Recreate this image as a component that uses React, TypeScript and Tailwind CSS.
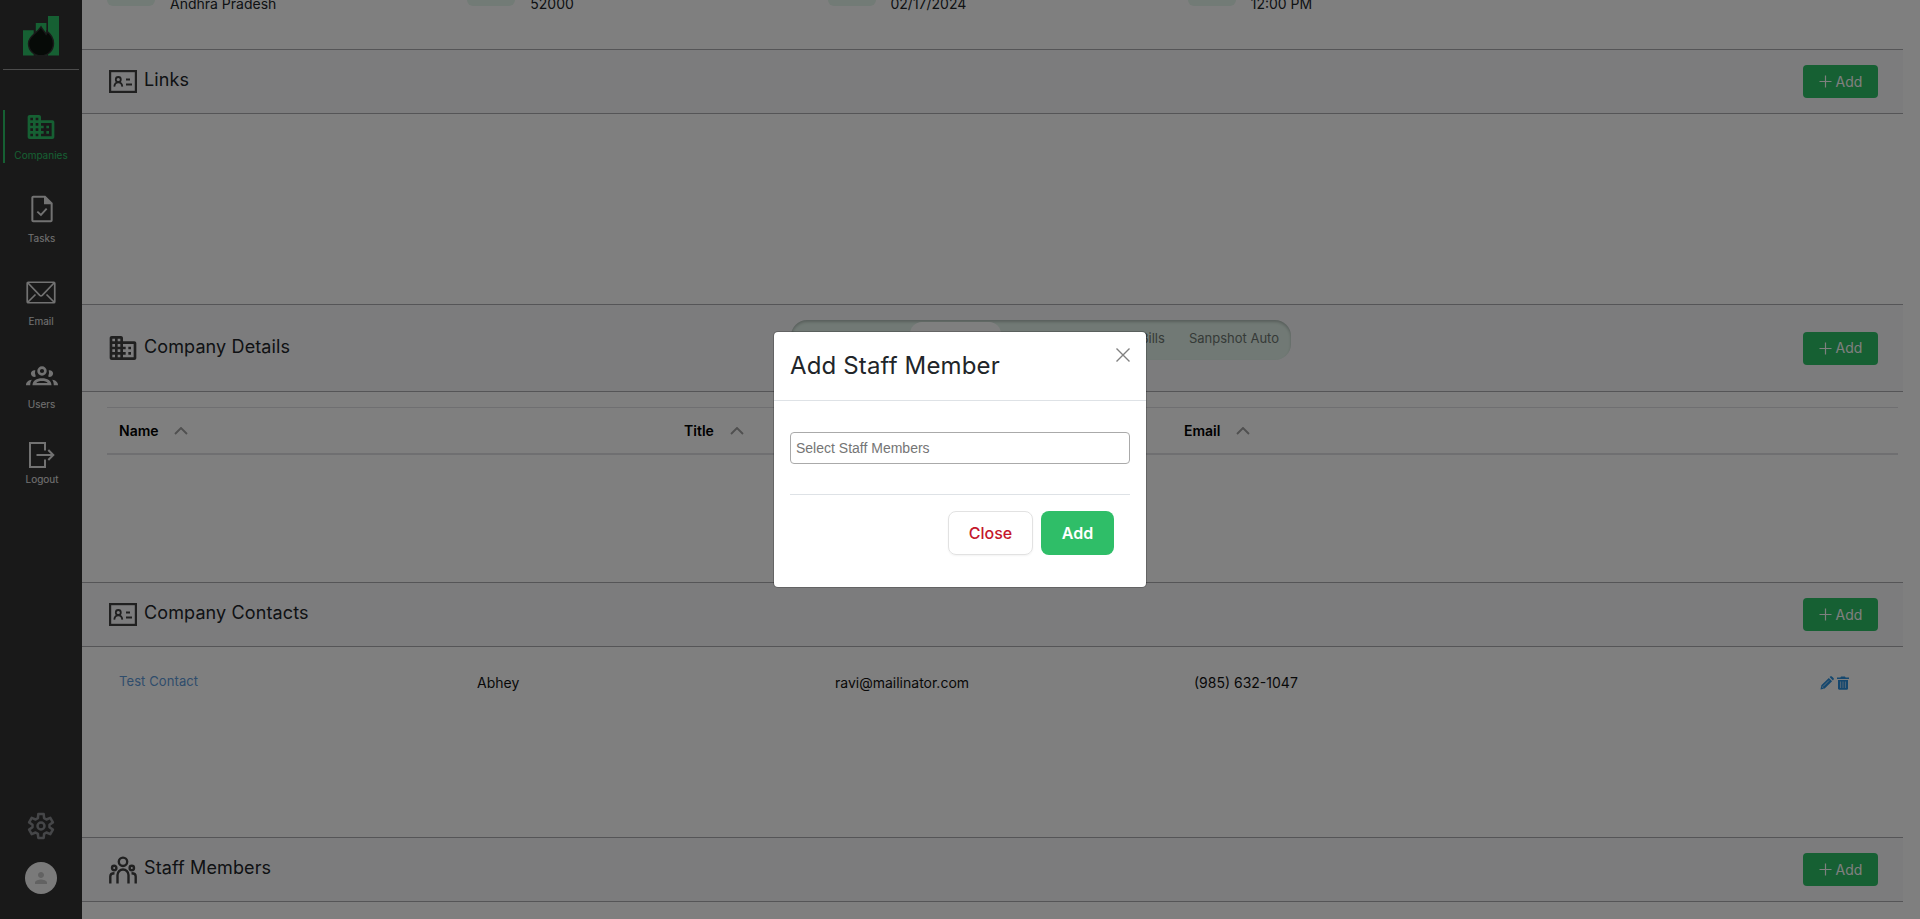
import React from 'react';
import { MdPerson } from 'react-icons/md';

type IconProps = { className?: string };

const LogoMark = ({ className }: IconProps) => (
  <svg className={className} viewBox="0 0 36 40" width="36" height="40">
    <path fill="#2cc066" d="M0 14.300h10.700v25.200H0zM12.800 7h10.600v32.500H12.800zM25 0h11v39.500H25z" />
    <path
      fill="#0c140f"
      stroke="#333333"
      strokeWidth="1.400"
      d="M18 10.800c1.800 3.400 4 5 5.200 7.600 .7 -.8 .9 -2 .8 -3 3.500 2.600 6.500 7 6.500 12 0 7 -5.500 12.400 -12.500 12.400S5.500 34.400 5.500 27.400c0 -7.200 7.800 -9.400 12.500 -16.600z"
    />
  </svg>
);

const BuildingIcon = ({ className }: IconProps) => (
  <svg className={className} viewBox="0 0 24 24" width="32" height="32" fill="currentColor">
    <path d="M12 7V4.500C12 3.700 11.300 3 10.500 3h-7C2.700 3 2 3.700 2 4.500v15c0 .8.7 1.500 1.500 1.500h17c.8 0 1.500-.7 1.500-1.500v-11c0-.8-.7-1.500-1.500-1.500H12zM6 19H4v-2h2v2zm0-4H4v-2h2v2zm0-4H4V9h2v2zm0-4H4V5h2v2zm4 12H8v-2h2v2zm0-4H8v-2h2v2zm0-4H8V9h2v2zm0-4H8V5h2v2zm10 12h-8v-2h2v-2h-2v-2h2v-2h-2V9h8v10zm-2-8h-2v2h2v-2zm0 4h-2v2h2v-2z" />
  </svg>
);

const TaskIcon = ({ className }: IconProps) => (
  <svg className={className} viewBox="0 0 24 24" width="32" height="32">
    <path
      fill="currentColor"
      d="M14.500 2H5.500C4.700 2 4 2.700 4 3.500v17c0 .8.7 1.500 1.500 1.500h13c.8 0 1.500-.7 1.500-1.500V7.500L14.500 2zm4 18.500h-13v-17h8V8.500h5v12z"
    />
    <path d="M8.500 14l2.700 2.400 4.300-4.700" fill="none" stroke="currentColor" strokeWidth="1.400" />
  </svg>
);

const MailIcon = ({ className }: IconProps) => (
  <svg className={className} viewBox="0 0 30 23" width="30" height="23" fill="none" stroke="currentColor" strokeWidth="1.700">
    <rect x="1.250" y="1.250" width="27.500" height="20.500" rx="1" />
    <path d="M1.500 1.500l12.300 12.800q1.200 1 2.400 0L28.500 1.500M1.500 21.500l8-8M28.500 21.500l-8-8" />
  </svg>
);

const UsersIcon = ({ className }: IconProps) => (
  <svg className={className} viewBox="0 0 32 20" width="32" height="20" fill="currentColor">
    <circle cx="16" cy="5" r="3.400" fill="none" stroke="currentColor" strokeWidth="2.600" />
    <path d="M9.300 4.300A3.400 3.400 0 1 0 9.800 10.600 8 8 0 0 1 9.300 4.300zM22.700 4.300A3.400 3.400 0 1 1 22.200 10.600 8 8 0 0 0 22.700 4.300z" />
    <path d="M5.800 13.700C2.500 14.200 0 15.900 0 19.200h4.200c0-2.200.5-4 1.600-5.500zM26.200 13.700c3.300.5 5.800 2.200 5.800 5.500h-4.200c0-2.200-.5-4-1.600-5.500z" />
    <path
      fillRule="evenodd"
      d="M6.500 19.200c0-4.600 4.100-7 9.500-7s9.500 2.400 9.500 7zM10.300 16.900h11.400c-1-1.500-3.100-2-5.700-2s-4.700.5-5.700 2z"
    />
  </svg>
);

const LogoutIcon = ({ className }: IconProps) => (
  <svg className={className} viewBox="0 0 26 26" width="26" height="26" fill="none" stroke="currentColor" strokeWidth="2">
    <path d="M16 8.500V1H1v24h15v-7.500M7.500 13h17M19.300 8l5 5-5 5" />
  </svg>
);

const GearIcon = ({ className }: IconProps) => (
  <svg className={className} viewBox="0 0 28 28" width="28" height="28" fill="none" stroke="currentColor" strokeWidth="2.500" strokeLinejoin="round">
    <path d="M11.300 2h5.400l.4 4.200 2.300 1.300 3.900-1.700 2.600 4.600-3.400 2.300v2.600l3.400 2.300-2.600 4.600-3.900-1.700-2.300 1.300-.4 4.200h-5.400l-.4-4.200-2.300-1.300-3.900 1.700-2.600-4.600 3.400-2.300v-2.600L2.100 10.400l2.600-4.600 3.900 1.700 2.300-1.300z" />
    <circle cx="14" cy="14" r="3.500" />
  </svg>
);

const CardIcon = ({ className }: IconProps) => (
  <svg className={className} viewBox="0 0 28 23" width="28" height="23" fill="none" stroke="currentColor">
    <rect x="1.100" y="1.100" width="25.800" height="20.800" strokeWidth="2.200" />
    <circle cx="9.300" cy="9.500" r="2.500" strokeWidth="1.800" />
    <path d="M5.300 16.700c.3-3 1.700-4.300 4-4.300s3.700 1.300 4 4.300" strokeWidth="1.800" />
    <path d="M17 9.500h4M17 14.500h6" strokeWidth="2" />
  </svg>
);

const StaffIcon = ({ className }: IconProps) => (
  <svg className={className} viewBox="0 0 28 28" width="28" height="28" fill="none" stroke="currentColor" strokeWidth="2.400">
    <circle cx="14" cy="5.800" r="4.200" />
    <circle cx="5.200" cy="12" r="2.200" />
    <circle cx="22.800" cy="12" r="2.200" />
    <path d="M8.500 27.500V19a5.500 5.500 0 0 1 11 0v8.500M1.300 27.500V20.500q0-3.200 4.200-3.200M26.700 27.500V20.500q0-3.200-4.200-3.200" />
  </svg>
);

const SortIcon = () => (
  <svg viewBox="0 0 14 8" width="14" height="8" fill="none" stroke="#a0a0a0" strokeWidth="1.900">
    <path d="M1 7l6-6 6 6" />
  </svg>
);

const PencilIcon = () => (
  <svg viewBox="0 0 14 14" width="14" height="14">
    <path fill="#2a8fdc" d="M.5 13.500l.8-4.200L8.800 1.900l3.300 3.300-7.400 7.400zM9.600 1.100l.6-.6c.5-.5 1.200-.5 1.700 0l1.600 1.600c.5.500.5 1.200 0 1.700l-.6.6z" />
    <path stroke="#c9e0f2" strokeWidth=".9" d="M3 10.500l6-6M1.800 10.500l1.700 1.700" />
  </svg>
);

const TrashIcon = () => (
  <svg viewBox="0 0 12 14" width="12" height="14">
    <path fill="#2a8fdc" d="M4 .5h4l.6 1H12v1.500H0V1.500h3.400zM1 4h10v8.500c0 .8-.5 1.200-1.200 1.200H2.200c-.7 0-1.200-.4-1.200-1.200z" />
    <path stroke="#c9e0f2" strokeWidth=".8" d="M3.600 5.500v6.500M6 5.500v6.500M8.400 5.500v6.500" />
  </svg>
);

const PlusIcon = () => (
  <svg viewBox="0 0 13 13" width="13" height="13" stroke="currentColor" strokeWidth="1.200">
    <path d="M6.500 .5v12M.5 6.500h12" />
  </svg>
);

const NavItem = ({ label, active, className, children }: { label: string; active?: boolean; className: string; children: React.ReactNode }) => (
  <a className={`flex w-full flex-col items-center ${active ? 'text-[#2cc066]' : 'text-[#e4e4e4]'} ${className}`}>
    <span className="flex h-8 items-center justify-center">{children}</span>
    <span className="text-[10px] leading-3">{label}</span>
  </a>
);

const Sidebar = () => (
  <aside className="flex h-full w-[82px] shrink-0 flex-col items-center bg-[#333333]">
    <LogoMark className="mt-4 shrink-0" />
    <div className="mt-[13px] h-px w-[76px] shrink-0 bg-[#999999]" />
    <nav className="mt-10 flex w-full flex-col">
      <div className="ml-[3px] flex h-[53px] w-[79px] border-l-2 border-[#2cc066]">
        <NavItem label="Companies" active className="-ml-[2px] gap-1.5 pr-px pt-px">
          <BuildingIcon />
        </NavItem>
      </div>
      <NavItem label="Tasks" className="mt-[30px] gap-[7px] pl-px">
        <TaskIcon />
      </NavItem>
      <NavItem label="Email" className="mt-8 gap-[7px]">
        <MailIcon />
      </NavItem>
      <NavItem label="Users" className="mt-[33px] gap-1.5 pl-px">
        <UsersIcon />
      </NavItem>
      <NavItem label="Logout" className="mt-[29px] gap-0.5 pl-[2px]">
        <LogoutIcon />
      </NavItem>
    </nav>
    <div className="mb-[25px] mt-auto flex flex-col items-center gap-[22px]">
      <GearIcon className="text-[#8a8c90]" />
      <div className="flex size-8 items-center justify-center rounded-full bg-[#f4f4f4]">
        <MdPerson className="size-[18px] text-[#c4c4c4]" />
      </div>
    </div>
  </aside>
);

const AddButton = () => (
  <button className="ml-auto flex h-[33px] w-[75px] items-center justify-center gap-1 rounded-[4px] bg-[#2cc066] text-sm text-white">
    <PlusIcon />
    <span>Add</span>
  </button>
);

const SectionHeader = ({ title, icon, tall, children }: { title: string; icon: React.ReactNode; tall?: boolean; children?: React.ReactNode }) => (
  <header
    className={`flex shrink-0 items-center border-y border-[#aaabae] bg-[#f8f8fb] pl-[27px] pr-[25px] ${tall ? 'h-[88px]' : 'h-[65px]'}`}
  >
    <span className="flex w-7 shrink-0 justify-center text-[#404040]">{icon}</span>
    <h2 className={`ml-[7px] w-[170px] text-[18px] leading-6 tracking-[0.120px] text-[#212529] ${tall ? 'pb-0.5' : 'pb-1'}`}>{title}</h2>
    {children}
    <AddButton />
  </header>
);

const summary = ['Andhra Pradesh', '52000', '02/17/2024', '12:00 PM'];

const Page = () => (
  <main className="flex h-full w-[1821px] shrink-0 flex-col overflow-hidden bg-white">
    <div className="flex h-[49px] shrink-0 pl-[25px]">
      {summary.map((value) => (
        <div key={value} className="flex w-[360.250px] shrink-0">
          <div className="h-1.5 w-12 rounded-b-lg bg-[#e5f6ec]" />
          <span className="-mt-1.5 ml-[15px] text-sm leading-5 text-[#212529]">{value}</span>
        </div>
      ))}
    </div>

    <SectionHeader title="Links" icon={<CardIcon />} />
    <div className="h-[190px] shrink-0" />

    <SectionHeader title="Company Details" icon={<BuildingIcon className="shrink-0" />} tall>
      <div className="mb-4 ml-[477px] flex h-10 w-[500px] shrink-0 items-start justify-end rounded-2xl bg-[#e2f3ea] shadow-[inset_0_2px_3px_rgba(0,0,0,0.22)]">
        <div className="mr-[139px] mt-0.5 h-9 w-[91px] rounded-xl bg-white" />
        <span className="mr-6 mt-2 text-[13px] leading-5 text-[#6c7570]">Bills</span>
        <span className="mr-3 mt-2 text-[13px] leading-5 text-[#6c7570]">Sanpshot Auto</span>
      </div>
    </SectionHeader>
    <div className="h-[190px] shrink-0 pl-[25px] pr-[5px] pt-[15px]">
      <div className="flex h-12 items-center border-b-2 border-t border-[#dedfe2] pl-3 text-sm font-semibold text-black">
        <div className="flex w-[565px] items-center gap-[15px]">Name <SortIcon /></div>
        <div className="flex w-[500px] items-center gap-4">Title <SortIcon /></div>
        <div className="flex items-center gap-4">Email <SortIcon /></div>
      </div>
    </div>

    <SectionHeader title="Company Contacts" icon={<CardIcon />} />
    <div className="h-[190px] shrink-0 pl-[37px] pr-[54px] pt-6">
      <div className="flex items-center text-sm leading-5 text-[#111111]">
        <a className="w-[358px] pb-[3px] text-[13px] tracking-[0.100px] text-[#5f9ad8]">Test Contact</a>
        <span className="w-[358px]">Abhey</span>
        <span className="w-[359px]">ravi@mailinator.com</span>
        <span>(985) 632-1047</span>
        <span className="ml-auto flex gap-[3px]"><PencilIcon /><TrashIcon /></span>
      </div>
    </div>

    <SectionHeader title="Staff Members" icon={<StaffIcon />} />
  </main>
);

const StaffDialog = () => (
  <div className="absolute inset-0 flex items-center justify-center bg-black/50">
    <section role="dialog" className="flex h-[257px] w-[374px] flex-col rounded-[5px] border border-black/20 bg-white bg-clip-padding">
      <header className="flex h-[69px] shrink-0 items-start justify-between border-b border-[#dee2e6] px-4">
        <h1 className="mt-[18px] text-2xl leading-8 tracking-[0.150px] text-[#212529]">Add Staff Member</h1>
        <button className="mt-4 text-[#808080]">
          <svg viewBox="0 0 14 14" width="14" height="14" stroke="currentColor" strokeWidth="1.400">
            <path d="M.5.5l13 13M13.500.5l-13 13" />
          </svg>
        </button>
      </header>
      <div className="mx-4 h-[94px] shrink-0 border-b border-[#dee2e6] pt-[31px]">
        <input
          className="block h-8 w-full rounded-[4px] border border-[#aaaaaa] px-[5px] font-['Liberation_Sans',sans-serif] text-sm text-black placeholder:text-[#757575]"
          placeholder="Select Staff Members"
        />
      </div>
      <footer className="mr-8 mt-4 flex justify-end gap-2">
        <button className="h-11 w-[85px] rounded-lg border border-[#e2e2e2] text-base font-medium text-[#c4172c] shadow-[0_1px_2px_rgba(0,0,0,0.05)]">Close</button>
        <button className="h-11 w-[73px] rounded-lg bg-[#2fbe68] text-base font-semibold text-white">Add</button>
      </footer>
    </section>
  </div>
);

export default function App() {
  return (
    <div className="relative flex h-[919px] w-[1920px] overflow-hidden bg-white font-['Inter',sans-serif]">
      <Sidebar />
      <Page />
      <StaffDialog />
    </div>
  );
}
